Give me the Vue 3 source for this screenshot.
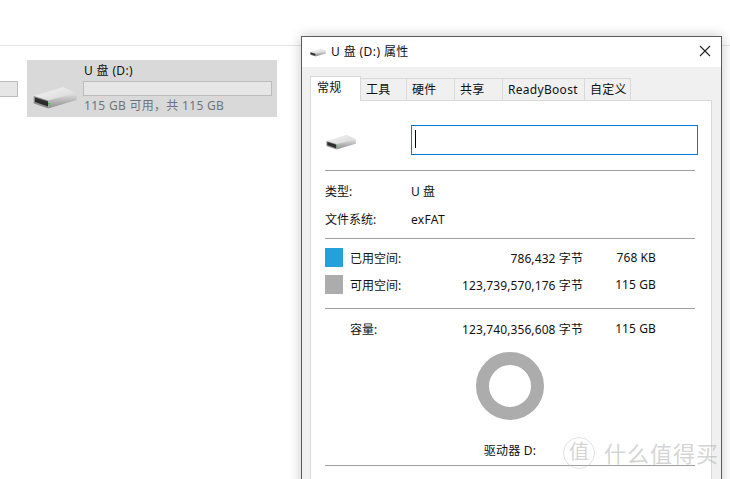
<template>
  <div class="desktop">
    <!-- explorer behind the dialog -->
    <div class="explorer">
      <div class="toolbar" />
      <div class="drives">
        <div class="stub" />
        <div class="tile">
          <svg class="drive drive-lg" viewBox="0 0 44 23"><use href="#drive-icon" /></svg>
          <div class="tile-info">
            <div class="tile-name">U 盘 (D:)</div>
            <div class="tile-bar" />
            <div class="tile-free">115 GB 可用，共 115 GB</div>
          </div>
        </div>
      </div>
    </div>

    <svg class="defs" width="0" height="0">
      <defs>
        <linearGradient id="top-face" x1="0" y1="0" x2="1" y2="1">
          <stop offset="0" stop-color="#f6f6f6" />
          <stop offset="1" stop-color="#d4d4d4" />
        </linearGradient>
        <linearGradient id="right-face" x1="0" y1="0" x2="0" y2="1">
          <stop offset="0" stop-color="#e2e2e2" />
          <stop offset="1" stop-color="#8e8e8e" />
        </linearGradient>
        <symbol id="drive-icon" viewBox="0 0 44 23">
          <polygon points="0.7,10 30,1 43.7,7 15.3,14.5" fill="url(#top-face)" />
          <polygon points="15.3,14.5 43.7,7 43.7,14 15.3,22.5" fill="url(#right-face)" />
          <polygon points="0.7,10 15.3,14.5 15.3,22.5 0.7,17.5" fill="#8d8d8d" />
          <polygon points="2,11.5 15,15.5 15,20.5 2,16" fill="#2c2c2c" />
          <rect x="15" y="17" width="2" height="1.6" fill="#35c24a" />
        </symbol>
      </defs>
    </svg>

    <!-- properties dialog -->
    <div class="dialog">
      <div class="titlebar">
        <svg class="drive drive-sm" viewBox="0 0 44 23"><use href="#drive-icon" /></svg>
        <span class="title">U 盘 (D:) 属性</span>
        <svg class="close" viewBox="0 0 12 12">
          <path d="M1 1 L11 11 M11 1 L1 11" stroke="#222" stroke-width="1.1" fill="none" />
        </svg>
      </div>

      <div class="dialog-body">
        <div class="tabs">
          <div
            v-for="tab in tabs"
            :key="tab.label"
            class="tab"
            :class="{ active: tab.active }"
            :style="{ width: tab.width + 'px' }"
          >{{ tab.label }}</div>
        </div>

        <div class="panel">
          <div class="name-row">
            <div class="icon-cell">
              <svg class="drive drive-md" viewBox="0 0 44 23"><use href="#drive-icon" /></svg>
            </div>
            <div class="name-input"><span class="caret" /></div>
          </div>
          <hr class="sep sep-a" />

          <div class="info-row first"><span class="info-key">类型:</span><span>U 盘</span></div>
          <div class="info-row"><span class="info-key">文件系统:</span><span class="fs-name">exFAT</span></div>
          <hr class="sep sep-b" />

          <div class="stats">
            <template v-for="row in usage" :key="row.label">
              <span class="swatch" :class="row.cls" />
              <span>{{ row.label }}</span>
              <span class="num">{{ row.bytes }} 字节</span>
              <span class="num">{{ row.size }}</span>
            </template>
          </div>
          <hr class="sep sep-c" />

          <div class="stats capacity">
            <span />
            <span>容量:</span>
            <span class="num">123,740,356,608 字节</span>
            <span class="num">115 GB</span>
          </div>

          <div class="donut-wrap"><div class="donut" /></div>
          <div class="drive-label">驱动器 D:</div>
          <hr class="sep sep-d" />
        </div>
      </div>
    </div>

    <!-- site watermark -->
    <div class="watermark">
      <span class="wm-badge">值</span>
      <span class="wm-text">什么值得买</span>
    </div>
  </div>
</template>

<script setup>
const tabs = [
  { label: '常规', width: 51, active: true },
  { label: '工具', width: 46 },
  { label: '硬件', width: 48 },
  { label: '共享', width: 48 },
  { label: 'ReadyBoost', width: 82 },
  { label: '自定义', width: 46 },
];

const usage = [
  { label: '已用空间:', bytes: '786,432', size: '768 KB', cls: 'used' },
  { label: '可用空间:', bytes: '123,739,570,176', size: '115 GB', cls: 'free' },
];
</script>

<style>
html, body { overflow: hidden; background: #fff; }
</style>

<style scoped>
.desktop {
  position: relative;
  width: 730px;
  height: 479px;
  overflow: hidden;
  background: #fff;
  font-family: "Noto Sans", "Noto Sans CJK SC", sans-serif;
  font-size: 12px;
  color: #111;
}
.defs { position: absolute; }

.toolbar { height: 45px; border-bottom: 1px solid #e5e5e5; }
.drives { display: flex; align-items: flex-start; padding-top: 14px; }
.stub {
  width: 18px; height: 16px; margin-top: 21px;
  box-sizing: border-box;
  background: #e6e6e6;
  border: 1px solid #bcbcbc;
  border-left: none;
}
.tile {
  display: flex;
  width: 250px; height: 57px;
  margin-left: 9px;
  background: #d9d9d9;
}
.drive { display: block; }
.drive-lg { width: 44px; height: 23px; margin: 26px 6px 0 6px; }
.tile-info { width: 189px; }
.tile-name { height: 21px; line-height: 22px; padding-left: 1px; letter-spacing: 0.35px; }
.tile-bar {
  height: 15px;
  box-sizing: border-box;
  background: #e6e6e6;
  border: 1px solid #bcbcbc;
}
.tile-free { height: 20px; line-height: 20px; padding-left: 1px; letter-spacing: 0.3px; color: #6d7580; }

.dialog {
  position: absolute;
  left: 301px; top: 36px;
  width: 421px; height: 470px;
  box-sizing: border-box;
  background: #f0f0f0;
  border: 1px solid #5c5c5c;
  box-shadow: 0 0 12px rgba(0, 0, 0, 0.22);
}
.titlebar {
  display: flex; align-items: center;
  height: 30px;
  padding: 0 10px 2px 8px;
  box-sizing: border-box;
  background: #fff;
}
.drive-sm { width: 16px; height: 9px; margin-top: 3px; }
.title { margin-left: 5px; letter-spacing: 0.4px; }
.close { width: 12px; height: 12px; margin-left: auto; }

.dialog-body { padding: 9px 9px 0 8px; }
.tabs { display: flex; align-items: flex-end; height: 24px; position: relative; }
.tab {
  height: 22px; line-height: 21px;
  padding-left: 5px;
  box-sizing: border-box;
  background: #f0f0f0;
  border: 1px solid #d9d9d9;
  border-left: none;
  border-bottom: none;
  letter-spacing: 0.3px;
}
.tab.active {
  height: 25px; line-height: 22px;
  padding-left: 6px;
  background: #fff;
  border-left: 1px solid #d9d9d9;
  margin-bottom: -1px;
  position: relative;
}
.panel {
  height: 400px;
  box-sizing: border-box;
  padding: 24px 0 0 14px;
  background: #fff;
  border: 1px solid #d9d9d9;
}

.name-row { display: flex; height: 30px; }
.icon-cell { width: 86px; display: flex; align-items: center; }
.drive-md { width: 30px; height: 16px; margin: 3px 0 0 1px; }
.name-input {
  width: 287px;
  box-sizing: border-box;
  background: #fff;
  border: 1px solid #0078d7;
  padding: 4px 3px;
}
.caret { display: block; width: 1px; height: 18px; background: #000; }

.sep { width: 370px; height: 1px; margin: 0; border: none; background: #a0a0a0; }
.sep-a { margin-top: 15px; }
.sep-b { margin-top: 5px; }
.sep-c { margin-top: 14px; }
.sep-d { margin-top: 5px; }

.info-row { display: flex; height: 28px; align-items: center; }
.info-row.first { margin-top: 6px; }
.info-key { width: 86px; }
.fs-name { letter-spacing: 0.3px; }

.stats {
  display: grid;
  grid-template-columns: 25px 100px 133px 73px;
  grid-auto-rows: 19px;
  row-gap: 8px;
  align-items: center;
  margin-top: 9px;
}
.capacity { margin-top: 10px; }
.num { text-align: right; white-space: nowrap; letter-spacing: 0.1px; }
.swatch { display: block; width: 18px; height: 19px; }
.swatch.used { background: #26a0da; }
.swatch.free { background: #acacac; }

.donut-wrap { display: flex; justify-content: center; width: 370px; margin-top: 14px; }
.donut {
  width: 68px; height: 68px;
  box-sizing: border-box;
  border: 13px solid #acacac;
  border-radius: 50%;
}
.drive-label { width: 370px; margin-top: 22px; line-height: 18px; text-align: center; letter-spacing: 0.2px; }

.watermark {
  position: absolute;
  left: 563px; top: 437px;
  display: flex; align-items: center;
  color: rgba(170, 170, 170, 0.5);
  pointer-events: none;
}
.wm-badge {
  width: 30px; height: 30px;
  line-height: 28px;
  text-align: center;
  font-size: 20px;
  border: 1px solid rgba(190, 190, 190, 0.45);
  border-radius: 50%;
}
.wm-text { margin-left: 9px; font-size: 22px; letter-spacing: 1px; line-height: 30px; }
</style>
